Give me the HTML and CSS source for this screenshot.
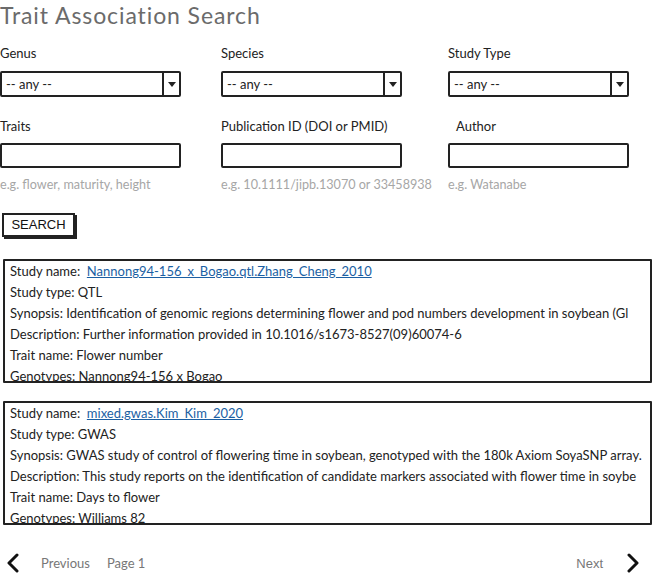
FILE: index.html
```html
<!DOCTYPE html>
<html>
<head>
<meta charset="utf-8">
<link rel="stylesheet" href="styles.css">
</head>
<body>
<h1 class="title">Trait Association Search</h1>
<div class="filters">
  <div class="field">
    <div class="label">Genus</div>
    <div class="select"><span class="select-text">-- any --</span><span class="select-btn"><span class="arrow"></span></span></div>
  </div>
  <div class="field">
    <div class="label">Species</div>
    <div class="select"><span class="select-text">-- any --</span><span class="select-btn"><span class="arrow"></span></span></div>
  </div>
  <div class="field">
    <div class="label">Study Type</div>
    <div class="select"><span class="select-text">-- any --</span><span class="select-btn"><span class="arrow"></span></span></div>
  </div>
  <div class="field">
    <div class="label label-2">Traits</div>
    <div class="input"></div>
    <div class="hint">e.g. flower, maturity, height</div>
  </div>
  <div class="field">
    <div class="label label-2">Publication ID (DOI or PMID)</div>
    <div class="input"></div>
    <div class="hint">e.g. 10.1111/jipb.13070 or 33458938</div>
  </div>
  <div class="field">
    <div class="label label-2 label-indent">Author</div>
    <div class="input"></div>
    <div class="hint">e.g. Watanabe</div>
  </div>
</div>
<button class="search-btn">SEARCH</button>

<div class="result">
  <div class="row">Study name: &nbsp;<a class="link" href="#">Nannong94-156_x_Bogao.qtl.Zhang_Cheng_2010</a></div>
  <div class="row">Study type: QTL</div>
  <div class="row">Synopsis: Identification of genomic regions determining flower and pod numbers development in soybean (Gl</div>
  <div class="row">Description: Further information provided in 10.1016/s1673-8527(09)60074-6</div>
  <div class="row">Trait name: Flower number</div>
  <div class="row">Genotypes: Nannong94-156 x Bogao</div>
</div>

<div class="result result-2">
  <div class="row">Study name: &nbsp;<a class="link" href="#">mixed.gwas.Kim_Kim_2020</a></div>
  <div class="row">Study type: GWAS</div>
  <div class="row">Synopsis: GWAS study of control of flowering time in soybean, genotyped with the 180k Axiom SoyaSNP array.</div>
  <div class="row">Description: This study reports on the identification of candidate markers associated with flower time in soybe</div>
  <div class="row">Trait name: Days to flower</div>
  <div class="row">Genotypes: Williams 82</div>
</div>

<div class="pager">
  <svg class="chev" width="14" height="20" viewBox="0 0 14 20"><path d="M11 2 L3 10 L11 18" fill="none" stroke="#111" stroke-width="3" stroke-linecap="round" stroke-linejoin="round"/></svg>
  <span class="pager-text prev">Previous</span>
  <span class="pager-text page">Page 1</span>
  <span class="spacer"></span>
  <span class="pager-text next">Next</span>
  <svg class="chev chev-r" width="14" height="20" viewBox="0 0 14 20"><path d="M3 2 L11 10 L3 18" fill="none" stroke="#111" stroke-width="3" stroke-linecap="round" stroke-linejoin="round"/></svg>
</div>
</body>
</html>
```

FILE: styles.css
```css
* { box-sizing: border-box; }
body {
  margin: 0;
  background: #fff;
  font-family: Lato, "Open Sans", sans-serif;
  font-size: 13px;
  color: #222;
  width: 653px;
  overflow: hidden;
}
.title {
  margin: 0;
  padding-top: 1px;
  font-size: 23px;
  line-height: 28px;
  font-weight: 400;
  color: #6b6b6b;
  letter-spacing: 0.9px;
}
.filters {
  display: grid;
  grid-template-columns: 221px 227px 205px;
}
.field { display: flex; flex-direction: column; }
.label {
  margin-top: 16px;
  line-height: 16px;
  height: 16px;
  color: #222;
}
.label-2 { margin-top: 21px; }
.label-indent { padding-left: 8px; }
.select {
  margin-top: 10px;
  width: 181px;
  height: 26px;
  border: 2px solid #222;
  border-radius: 2px;
  display: flex;
  align-items: center;
}
.select-text { flex: 1; padding-left: 4px; color: #222; }
.select-btn {
  width: 17px;
  height: 100%;
  border-left: 2px solid #222;
  display: flex;
  align-items: center;
  justify-content: center;
}
.arrow {
  width: 0; height: 0;
  border-left: 4px solid transparent;
  border-right: 4px solid transparent;
  border-top: 5px solid #222;
}
.input {
  margin-top: 9px;
  width: 181px;
  height: 25px;
  border: 2px solid #222;
  border-radius: 2px;
}
.hint {
  margin-top: 9px;
  line-height: 16px;
  font-size: 12.6px;
  color: #a6a6a6;
}
.search-btn {
  display: block;
  margin: 20px 0 0 2px;
  width: 73px;
  height: 24px;
  padding: 0;
  background: #fff;
  border: 2px solid #222;
  box-shadow: 2px 2px 0 #222;
  font-family: "Liberation Sans", Arial, sans-serif;
  font-size: 13px;
  color: #111;
  text-align: center;
  line-height: 20px;
}
.result {
  margin: 22px 1px 0 3px;
  height: 124px;
  border: 2px solid #222;
  border-radius: 1px;
  overflow: hidden;
  padding-left: 5px;
}
.result-2 { margin-top: 18px; }
.row {
  line-height: 21px;
  height: 21px;
  white-space: nowrap;
}
.link { color: #1b5fa3; text-decoration: underline; }
.pager {
  display: flex;
  align-items: center;
  margin-top: 28px;
  height: 20px;
}
.chev { margin-left: 6px; flex: none; }
.chev-r { margin-left: 0; margin-right: 13px; }
.pager-text { color: #777; }
.prev { margin-left: 21px; }
.page { margin-left: 17px; }
.spacer { flex: 1; }
.next {
  font-family: "Liberation Sans", Arial, sans-serif;
  margin-right: 23px;
}
```
